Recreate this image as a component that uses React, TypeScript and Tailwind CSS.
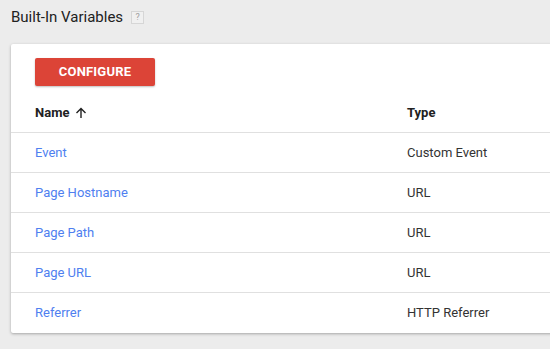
import React from "react";

const rows = [
  ["Event", "Custom Event"],
  ["Page Hostname", "URL"],
  ["Page Path", "URL"],
  ["Page URL", "URL"],
  ["Referrer", "HTTP Referrer"],
];

export default function App() {
  return (
    <div
      className="w-[550px] h-[349px] overflow-hidden bg-[#ececec] text-[#212121]"
      style={{ fontFamily: "Roboto, 'Liberation Sans', sans-serif" }}
    >
      <div className="flex items-center pl-[11px] pt-[6px] h-[23px] box-content">
        <span className="text-[15px] text-[#212121] leading-none">Built-In Variables</span>
        <span className="ml-[8px] w-[13px] h-[13px] border border-[#d6d6d6] bg-[#f0f0f0] text-[9px] text-[#9e9e9e] flex items-center justify-center leading-none">?</span>
      </div>
      <div className="ml-[11px] mt-[15px] w-[560px] bg-white rounded-[2px] shadow-[0_1px_3px_rgba(0,0,0,0.3)]">
        <div className="pl-[24px] pt-[14px]">
          <button className="w-[120px] h-[28px] bg-[#dc4437] text-white text-[13px] font-bold rounded-[2px] shadow-[0_1px_2px_rgba(0,0,0,0.25)] tracking-[0.2px]">
            CONFIGURE
          </button>
        </div>
        <div className="flex items-start pt-[19px] h-[47px] border-b border-[#e0e0e0] text-[13px] leading-[15px] font-bold">
          <div className="pl-[24px] w-[396px] flex items-center gap-[6px]">
            Name
            <svg width="12" height="12" viewBox="0 0 12 12" fill="none" stroke="#212121" strokeWidth="1.4">
              <path d="M6 11V1.5M1.5 6L6 1.5L10.5 6" />
            </svg>
          </div>
          <div>Type</div>
        </div>
        {rows.map(([n, t], i) => (
          <div
            key={n}
            className={`flex items-center h-[40px] text-[13px] ${i < rows.length - 1 ? "border-b border-[#e0e0e0]" : ""}`}
          >
            <div className="pl-[24px] w-[396px] text-[#4f7ff0]">{n}</div>
            <div className="text-[#333]">{t}</div>
          </div>
        ))}
      </div>
    </div>
  );
}
